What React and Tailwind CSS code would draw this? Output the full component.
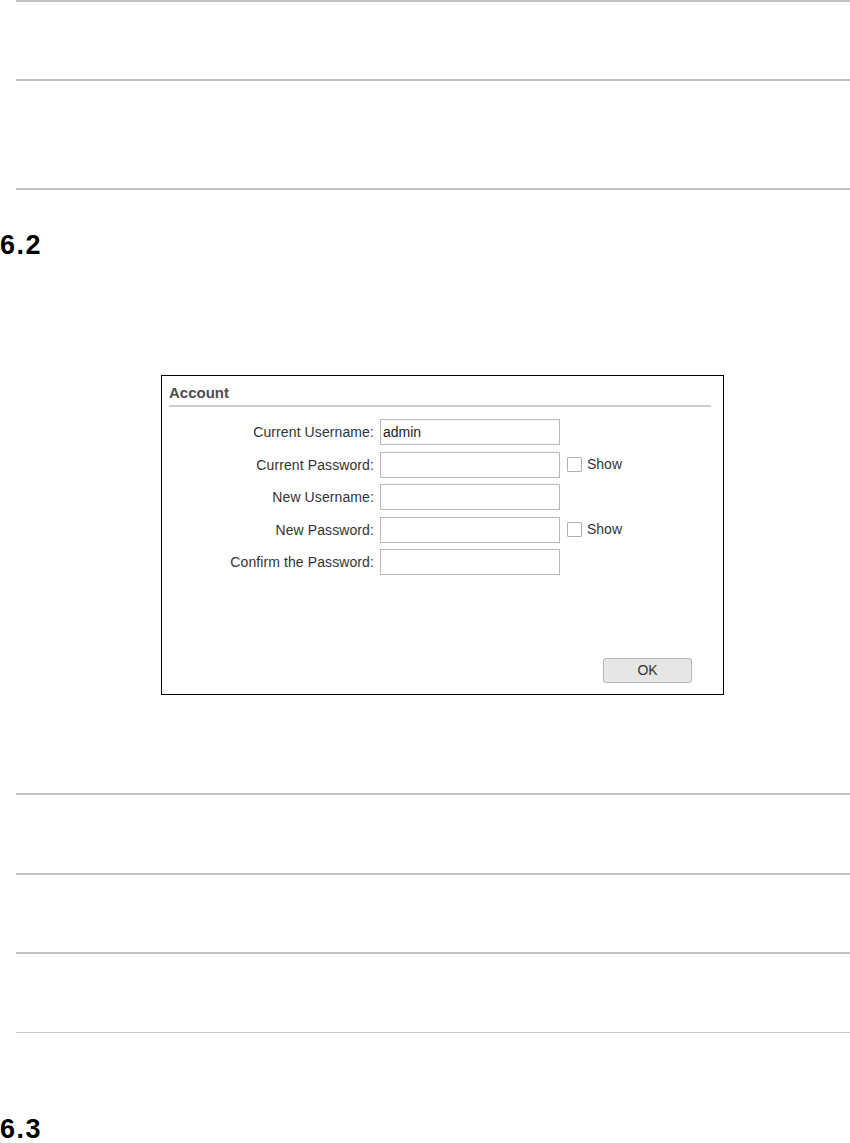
import { useState } from 'react';

const rows = [
  { label: 'Current Username:', value: 'admin', show: false },
  { label: 'Current Password:', value: '', show: true },
  { label: 'New Username:', value: '', show: false },
  { label: 'New Password:', value: '', show: true },
  { label: 'Confirm the Password:', value: '', show: false },
];

function Rule({ className = '' }) {
  return <div className={`ml-4 h-[2px] bg-[#c0c0c0] ${className}`} />;
}

function AccountPanel() {
  const [values, setValues] = useState(rows.map((r) => r.value));
  const [shown, setShown] = useState(rows.map(() => false));

  return (
    <div className="ml-[161px] mt-[115px] flex h-[320px] w-[563px] flex-col border border-black bg-white">
      <div className="px-[7px] pt-[8px]">
        <h2 className="text-[15px] font-bold leading-[18px] text-[#4d4d4d]">Account</h2>
        <div className="mt-[3px] mr-[5px] h-[2px] bg-[#cccccc]" />
      </div>

      <div className="mt-[12px] grid grid-cols-[212px_180px_auto] items-center gap-x-[6px] gap-y-[6.5px]">
        {rows.map((r, i) => (
          <div key={r.label} className="contents">
            <label className="text-right text-[14px] leading-[26px] tracking-[0.1px] text-[#333]">{r.label}</label>
            <input
              type={r.show && !shown[i] ? 'password' : 'text'}
              value={values[i]}
              onChange={(e) => {
                const next = [...values];
                next[i] = e.target.value;
                setValues(next);
              }}
              className="h-[26px] w-[180px] border border-[#b9b9b9] bg-white px-[2px] text-[14px] text-[#222] outline-none"
            />
            {r.show ? (
              <label className="ml-[1px] flex items-center gap-[5px] text-[14px] text-[#333]">
                <input
                  type="checkbox"
                  checked={shown[i]}
                  onChange={() => {
                    const next = [...shown];
                    next[i] = !next[i];
                    setShown(next);
                  }}
                  className="h-[15px] w-[15px] appearance-none rounded-[1px] border border-[#b0b0b0] bg-white"
                />
                Show
              </label>
            ) : (
              <span />
            )}
          </div>
        ))}
      </div>

      <div className="mt-auto flex justify-end pr-[31px] pb-[11px]">
        <button className="h-[25px] w-[89px] rounded-[3px] border border-[#b5b5b5] bg-[#e6e6e6] text-[14px] text-[#333]">
          OK
        </button>
      </div>
    </div>
  );
}

export default function App() {
  return (
    <div className="min-h-[1143px] w-[850px] bg-white font-['Liberation_Sans',Arial,sans-serif] text-black">
      <Rule />
      <Rule className="mt-[77px]" />
      <Rule className="mt-[107px]" />

      <h1 className="mt-[40px] text-[27px] font-bold leading-[30px] tracking-[1.5px]">6.2</h1>

      <AccountPanel />

      <Rule className="mt-[98px]" />
      <Rule className="mt-[78px]" />
      <Rule className="mt-[77px]" />
      <div className="ml-4 mt-[78px] h-[1px] bg-[#c8c8c8]" />

      <h1 className="mt-[81px] text-[27px] font-bold leading-[30px] tracking-[1.5px]">6.3</h1>
    </div>
  );
}
